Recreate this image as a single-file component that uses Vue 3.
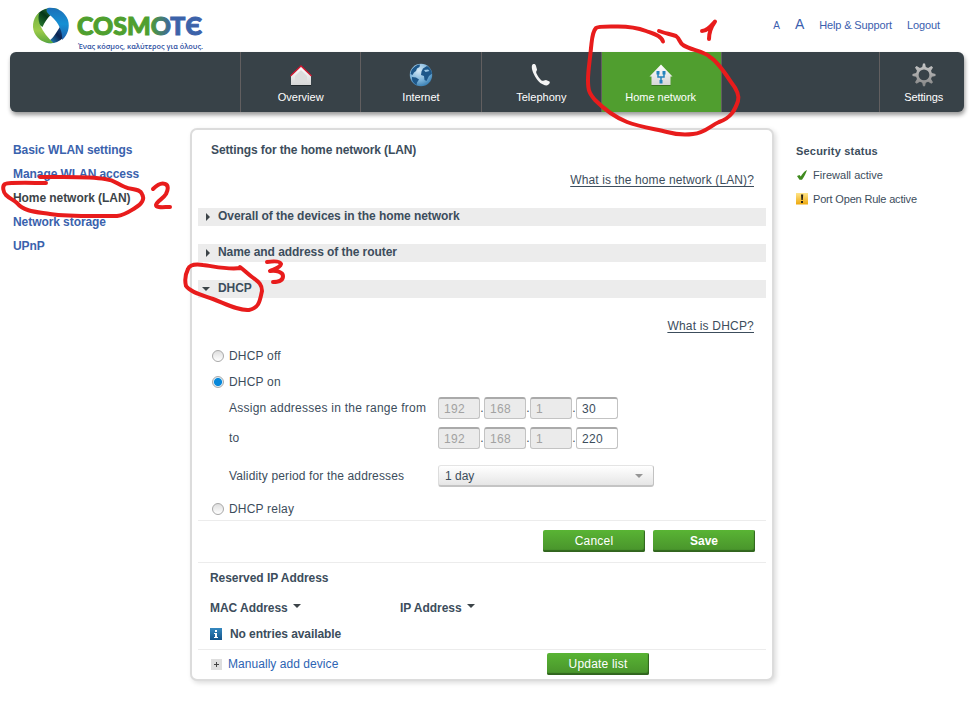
<script setup>
import { ref } from 'vue'

const sideLinks = [
  { label: 'Basic WLAN settings' },
  { label: 'Manage WLAN access' },
  { label: 'Home network (LAN)', active: true },
  { label: 'Network storage' },
  { label: 'UPnP' }
]
const ranges = [
  { label: 'Assign addresses in the range from', last: '30' },
  { label: 'to', last: '220' }
]
const fixedOctets = ['192', '168', '1']
const mode = ref('on')
</script>

<template>
  <div class="page">
    <header class="top">
      <svg class="logo" width="180" height="46" viewBox="30 6 180 46">
        <defs>
          <linearGradient id="lg-green" x1="0" y1="0" x2="0" y2="1">
            <stop offset="0" stop-color="#6fb040" /><stop offset=".6" stop-color="#9ccb4a" /><stop offset="1" stop-color="#5ba63c" />
          </linearGradient>
          <linearGradient id="lg-dark" x1="0" y1="1" x2="1" y2="0">
            <stop offset="0" stop-color="#2f8a33" /><stop offset=".5" stop-color="#05361a" /><stop offset="1" stop-color="#58b046" />
          </linearGradient>
          <linearGradient id="lg-blue" x1="0" y1="0" x2="0" y2="1">
            <stop offset="0" stop-color="#1c6fb8" /><stop offset=".5" stop-color="#1590d4" /><stop offset="1" stop-color="#1f5fac" />
          </linearGradient>
          <linearGradient id="lg-navy" x1="0" y1="1" x2="1" y2="0">
            <stop offset="0" stop-color="#2ba3df" /><stop offset=".5" stop-color="#0b2350" /><stop offset="1" stop-color="#1e62ab" />
          </linearGradient>
          <linearGradient id="lg-word" gradientUnits="userSpaceOnUse" x1="77" y1="0" x2="202" y2="0">
            <stop offset=".58" stop-color="#4f9f2f" /><stop offset=".76" stop-color="#3c62a9" />
          </linearGradient>
        </defs>
        <path d="M62 23C67 29 66 34 63 38C58 43 51 44.500 46 42.500C52 40 56 34 62 23Z" fill="url(#lg-navy)" />
        <path d="M39 12.500C45 7.500 53 7 59 9.500C53 12 47 17 42.500 27C36 23 35 17 39 12.500Z" fill="url(#lg-dark)" />
        <path d="M40 12C34 16 31 25 34.500 33C38 40 45 44 53.500 43C48 38 43 32 40 25C38 20 38 15 40 12Z" fill="url(#lg-green)" />
        <path d="M48 8C57 7 65 12 68 20C70 27 68 35 62 40C63 32 59 23 51 16C47 13 45 10 48 8Z" fill="url(#lg-blue)" />
        <text class="wordmark" x="77" y="34.800" textLength="125" lengthAdjust="spacingAndGlyphs" fill="url(#lg-word)" stroke="url(#lg-word)" stroke-width="1">COSMOTЄ</text>
        <text class="tagline" x="78" y="49.300" textLength="125" lengthAdjust="spacingAndGlyphs">Ένας κόσμος, καλύτερος για όλους.</text>
      </svg>
      <nav class="tools">
        <a class="small-a">A</a>
        <a class="big-a">A</a>
        <a class="help">Help &amp; Support</a>
        <a>Logout</a>
      </nav>
    </header>

    <nav class="bar">
      <a class="tab">
        <svg width="24" height="24" viewBox="0 0 24 24">
          <defs><linearGradient id="paper" x1="0" y1="0" x2="0" y2="1"><stop offset="0" stop-color="#fff" /><stop offset="1" stop-color="#d6d6d6" /></linearGradient></defs>
          <path d="M2 12.500V22h20v-9.500L12 3z" fill="url(#paper)" />
          <path d="M6 13v6h12v-6L12 7z" fill="#dcdcdc" />
          <path d="M1.500 13 12 3l10.500 10" fill="none" stroke="#d4152f" stroke-width="1.300" />
          <path d="M2 22.500h20" stroke="#20272b" />
        </svg>
        <span>Overview</span>
      </a>
      <a class="tab">
        <svg width="24" height="24" viewBox="0 0 24 24">
          <defs><radialGradient id="globe" cx=".4" cy=".3" r=".75"><stop offset="0" stop-color="#d5e9f6" /><stop offset=".6" stop-color="#7db4da" /><stop offset="1" stop-color="#347bb0" /></radialGradient></defs>
          <circle cx="12" cy="12" r="11.200" fill="url(#globe)" />
          <path d="M2.500 7C5 3.500 8 1.500 11 1.500L10.500 4 8 5.500 7 8 5 9.500 3.500 12 1.500 11zM3 14l4 .500 3 2L8 19.500 7.500 22C4 20 2.500 17 3 14zM14 5.500l4-2.500c2.500 1.500 4.500 4 5 7.500L20 13l-2.500 5-2-1-.500-4-3-1 .500-3.500z" fill="#1d5789" />
          <path d="M15 7l4-.500 1.500 1.500-4 1z" fill="#9ac7e6" />
        </svg>
        <span>Internet</span>
      </a>
      <a class="tab">
        <svg width="24" height="24" viewBox="0 0 24 24">
          <path d="M3.500 1.500C5 .500 6.500 1 7 3L8 6.500C8 8 6.500 8 7.500 10.500C8.500 13 10.500 15.500 12.500 17.500C14 18.500 15 17 17 17L20.500 18.500C21.500 19.500 20 22 17.500 22.500C13 22 9 18.500 7 15C4 10.500 1.500 4 3.500 1.500Z" fill="#f4f4f4" />
        </svg>
        <span>Telephony</span>
      </a>
      <a class="tab selected">
        <svg width="24" height="24" viewBox="0 0 24 24">
          <path d="M.500 13.500 12 1.500l11.500 12H21.500V22h-19v-8.500z" fill="url(#paper)" />
          <path d="M9 10v4h6v-4M12 14v5" fill="none" stroke="#2483bd" stroke-width="1.500" />
          <path d="M7.500 8h3v3.500h-3zM13.500 8h3v3.500h-3zM10.500 17h3v3.500h-3z" fill="#2483bd" />
          <path d="M2.500 22.500h19" stroke="#397520" />
        </svg>
        <span>Home network</span>
      </a>
      <div class="filler"></div>
      <a class="tab settings">
        <svg width="24" height="24" viewBox="0 0 24 24">
          <defs><linearGradient id="gear" x1="0" y1="0" x2="0" y2="1"><stop offset="0" stop-color="#c9c9c9" /><stop offset="1" stop-color="#858585" /></linearGradient></defs>
          <path fill="url(#gear)" fill-rule="evenodd" d="M11 .500h2l.8 3.600 2.300.9L19.400 3l1.600 1.600-2 3.200.9 2.300 3.600.8v2l-3.600.8-.9 2.300 2 3.200-1.600 1.600-3.300-2-2.300.9-.8 3.600h-2l-.8-3.600-2.300-.9-3.300 2L3 19.200l2-3.200-.9-2.300-3.600-.8v-2l3.600-.8L5 7.800 3 4.600 4.600 3l3.300 2 2.300-.9zM12 6.500a5.400 5.400 0 1 0 0 10.800a5.400 5.400 0 0 0 0-10.800z" />
        </svg>
        <span>Settings</span>
      </a>
    </nav>

    <div class="columns">
      <aside class="side">
        <a v-for="l in sideLinks" :key="l.label" :class="{ active: l.active }">{{ l.label }}</a>
      </aside>

      <main class="panel">
        <h1>Settings for the home network (LAN)</h1>
        <div class="question"><a>What is the home network (LAN)?</a></div>
        <div class="fold"><i class="tri right"></i><span>Overall of the devices in the home network</span></div>
        <div class="fold"><i class="tri right"></i><span>Name and address of the router</span></div>
        <div class="fold"><i class="tri down"></i><span>DHCP</span></div>
        <div class="question dhcp"><a>What is DHCP?</a></div>

        <label class="choice"><input v-model="mode" type="radio" value="off" /><span>DHCP off</span></label>
        <label class="choice"><input v-model="mode" type="radio" value="on" /><span>DHCP on</span></label>
        <div v-for="r in ranges" :key="r.label" class="field">
          <span class="name">{{ r.label }}</span>
          <template v-for="o in fixedOctets" :key="o">
            <input class="octet" type="text" :value="o" disabled /><b class="dot">.</b>
          </template>
          <input class="octet" type="text" :value="r.last" />
        </div>
        <div class="field period">
          <span class="name validity">Validity period for the addresses</span>
          <button class="select"><span>1 day</span><i class="tri down"></i></button>
        </div>
        <label class="choice relay"><input v-model="mode" type="radio" value="relay" /><span>DHCP relay</span></label>

        <div class="actions">
          <button class="btn">Cancel</button>
          <button class="btn strong">Save</button>
        </div>

        <section class="reserved">
          <h2>Reserved IP Address</h2>
          <div class="heads"><span class="mac">MAC Address<i class="tri down"></i></span><span>IP Address<i class="tri down"></i></span></div>
          <div class="empty">
            <svg width="12" height="12" viewBox="0 0 12 12">
              <defs><linearGradient id="info" x1="0" y1="0" x2="0" y2="1"><stop offset="0" stop-color="#3689c0" /><stop offset="1" stop-color="#14548a" /></linearGradient></defs>
              <path d="M0 0h12v12H0z" fill="url(#info)" />
              <path d="M5 2h2v2H5zM4 5h3v4h1v1H4V9h1V6H4z" fill="#fff" />
            </svg>
            <span>No entries available</span>
          </div>
        </section>
        <div class="last">
          <svg width="11" height="11" viewBox="0 0 11 11"><path d="M0 0h11v11H0z" fill="#dedede" /><path d="M3 5.500h5M5.500 3v5" stroke="#444" /></svg>
          <a>Manually add device</a>
          <button class="btn">Update list</button>
        </div>
      </main>

      <aside class="status">
        <h2>Security status</h2>
        <p>
          <svg width="12" height="12" viewBox="0 0 12 12"><path d="M1 7 3.500 6 4.800 7.500C6 5 8 2.500 11 1C10 4 8.500 7.500 6 10.800H3.500z" fill="#3f8a1e" /></svg>
          <span>Firewall active</span>
        </p>
        <p>
          <svg width="12" height="12" viewBox="0 0 12 12">
            <defs><linearGradient id="warn" x1="0" y1="0" x2="0" y2="1"><stop offset="0" stop-color="#ffe58a" /><stop offset="1" stop-color="#eda80c" /></linearGradient></defs>
            <path d="M0 0h12v11.500H0z" fill="url(#warn)" /><path d="M5 1.500h2.200L6.800 7H5.400zM5 8h2v2H5z" fill="#262217" />
          </svg>
          <span class="port">Port Open Rule active</span>
        </p>
      </aside>
    </div>

    <!-- Hand-drawn step markers over the page -->
    <svg class="marks" width="972" height="710" viewBox="0 0 972 710">
      <path d="M663 41.500C661 35 651 33 646 31C638 28 628 26.500 618 26.500C608 26.500 598 26 596 28C592 32 592 40 591 48C590 60 588 70 588 80C588 90 589 93 595 100C607 112 617 118 627 122C640 127 655 129 667 132C676 134.500 685 135 693 134C705 133 710 126 719 122C731 118 735 110 738 101C740 94 735 87 731 82C725 73 718 62 710 57C704 51 690 50 683 45C679 42 680 39 676 36C670 34 664 33 659 31" />
      <path d="M702 31C707 31 711 26 715 21.500C711 27 709 34 709 39" />
      <path d="M46 183C33 183 10 182 5 184C2 186 3 192 6 195C10 199 14 200 17 203C24 212 38 212 50 214C70 217 100 216 117 216C125 215 130 211 135 208C142 204 145 199 142 194C140 188 131 190 125 187C117 184 115 180 105 179C90 176 65 177 40 177" />
      <path d="M153 189C157 185 161 182 165 184C169 185 168 190 166 194C163 199 157 201 156 205C156 208 163 207 170 207" />
      <path d="M241 268C227 270 213 266 203 265C196 264 190 264 188 269C185 275 185 282 186 286C190 292 202 295 213 299C226 304 239 311 249 310C260 308 260 299 262 291C262 283 257 281 252 277C248 274 244 270 240 267" />
      <path d="M267 262C274 261 280 261 281 264C280 268 274 269 270 271C276 270 283 272 283 276C283 280 279 282 273 282" />
    </svg>
  </div>
</template>

<style>
body { margin: 0; background: #fff; }
</style>

<style scoped>
.page { position: relative; width: 972px; height: 710px; overflow: hidden; font: 12px/16px "Liberation Sans", Arial, sans-serif; color: #3c4d5c; letter-spacing: .12px; }
.page * { box-sizing: border-box; }
h1, h2, p { margin: 0; font-size: 12px; }
.top { display: flex; justify-content: space-between; height: 52px; padding: 6px 32px 0 30px; }
.logo { display: block; }
.wordmark { font: 900 24px Lato, sans-serif; letter-spacing: 0; }
.tagline { font: 600 7.500px "Open Sans", sans-serif; letter-spacing: 0; fill: #2e4f9f; }
.tools { display: flex; align-items: baseline; height: 24px; padding-top: 10px; font-size: 11px; letter-spacing: -.12px; color: #3a5eae; }
.small-a { font-size: 10px; margin-right: 15px; }
.big-a { font-size: 14px; margin-right: 15px; }
.help { margin-right: 15px; }

.bar { display: flex; width: 954px; height: 60px; margin-left: 10px; padding-left: 230px; border-radius: 6px; background: #384248; box-shadow: 1px 3px 4px rgba(0, 0, 0, .4); }
.tab { display: flex; flex-direction: column; align-items: center; width: 120.330px; padding-top: 11px; border-left: 1px solid #625f60; color: #fff; font-size: 11px; letter-spacing: 0; }
.tab svg { display: block; margin-bottom: 2px; }
.tab.selected { background: #509e2f; padding-right: 2px; }
.filler { width: 158px; border-left: 1px solid #625f60; }
.tab.settings { flex: 1; padding-left: 3px; letter-spacing: -.1px; }

.columns { display: flex; align-items: flex-start; margin-top: 16px; }
.side { display: flex; flex-direction: column; width: 190px; padding: 10px 0 0 13px; letter-spacing: -.07px; }
.side a { height: 24px; line-height: 24px; font-weight: bold; color: #3a62ad; }
.side a.active { color: #3c4448; }
.panel { width: 584px; height: 553px; padding: 12px 6px 0; border: 2px solid #dcdcdc; border-radius: 7px; box-shadow: 2px 2px 5px rgba(0, 0, 0, .14); background: #fff; }
.panel h1 { padding-left: 13px; height: 30px; letter-spacing: -.1px; }
.question { height: 36px; padding-right: 12px; text-align: right; text-decoration: underline; text-underline-offset: 2px; }
.fold { display: flex; align-items: center; height: 18px; margin-bottom: 18px; background: #ececec; font-weight: bold; letter-spacing: -.06px; }
.fold span { padding-bottom: 2px; }
.fold .tri { width: 12px; margin-right: 8px; display: flex; justify-content: flex-end; }
.tri.right::after { content: ''; border: 4px solid transparent; border-left-color: #3c4448; border-right: 0; }
.tri.down::after { content: ''; display: block; border: 4px solid transparent; border-top-color: #3c4448; border-bottom: 0; }
.dhcp { height: 25px; margin-top: 20px; letter-spacing: .2px; }
.choice { display: flex; align-items: center; height: 26px; padding-left: 14px; letter-spacing: .2px; }
.choice input { appearance: none; width: 12px; height: 12px; margin: 0 5px 0 0; border: 1px solid #a8a8a8; border-radius: 50%; background: linear-gradient(#dedede, #fff); }
.choice input:checked { border-color: #aaa; background: radial-gradient(circle, #0788da 0 3.600px, #d6e9f5 4.400px); }
.field { display: flex; align-items: center; height: 22px; padding-left: 31px; margin-top: 2px; }
.field + .field { margin-top: 8px; }
.name { width: 209px; letter-spacing: .25px; }
.validity { letter-spacing: .14px; }
.octet { width: 42px; height: 22px; padding: 0 0 0 5px; border: 1px solid #c3c3c3; border-top: 2px solid #aaa; border-radius: 3px; background: #fff; font: 12px "Liberation Sans", Arial, sans-serif; letter-spacing: .3px; color: #3c4d5c; }
.octet:disabled { background: #ebebeb; color: #a2a2a2; }
.dot { width: 4px; font-weight: normal; text-align: center; }
.field + .period { margin-top: 16px; }
.select { display: flex; align-items: center; justify-content: space-between; width: 216px; height: 22px; padding: 0 10px 0 6px; border: 1px solid #c2c2c2; border-top-color: #e4e4e4; border-left-color: #ddd; border-bottom: 2px solid #c4c4c4; border-radius: 3px; background: linear-gradient(#fff, #e6e6e6); font: inherit; color: #3c4d5c; }
.select .tri::after { border-top-color: #969696; }
.relay { height: 24px; margin-top: 10px; }
.actions { display: flex; justify-content: flex-end; gap: 8px; height: 42px; padding: 9px 11px 0; margin-top: -1px; border-top: 1px solid #ececec; }
.btn { width: 102px; height: 22px; padding: 0; border: 0; border-radius: 2px; background: linear-gradient(#59b434, #48922b); box-shadow: inset -1px -2px 1px #31641f; color: #fff; font: 12px/20px "Liberation Sans", Arial, sans-serif; letter-spacing: .2px; }
.strong { font-weight: bold; letter-spacing: 0; }
.reserved { height: 87px; padding: 7px 12px 0; border-top: 1px solid #ececec; font-weight: bold; letter-spacing: -.05px; }
.heads { display: flex; margin-top: 14px; }
.heads .mac { width: 190px; }
.heads span { display: flex; }
.heads .tri { margin: 4px 0 0 5px; }
.empty { display: flex; align-items: center; gap: 8px; margin-top: 10px; letter-spacing: -.08px; }
.last { display: flex; align-items: center; height: 29px; padding-left: 13px; border-top: 1px solid #ececec; color: #2d64b3; letter-spacing: .05px; }
.last a { width: 325px; padding-left: 6px; }
.status { padding: 15px 0 0 22px; }
.status h2 { font-size: 11px; letter-spacing: .2px; }
.status p { display: flex; align-items: center; gap: 5px; height: 16px; margin-top: 8px; font-size: 11px; letter-spacing: .02px; }
.status .port { letter-spacing: -.18px; }
.marks { position: absolute; left: 0; top: 0; pointer-events: none; }
.marks path { fill: none; stroke: #e81c1c; stroke-width: 4; stroke-linecap: round; stroke-linejoin: round; }
</style>
